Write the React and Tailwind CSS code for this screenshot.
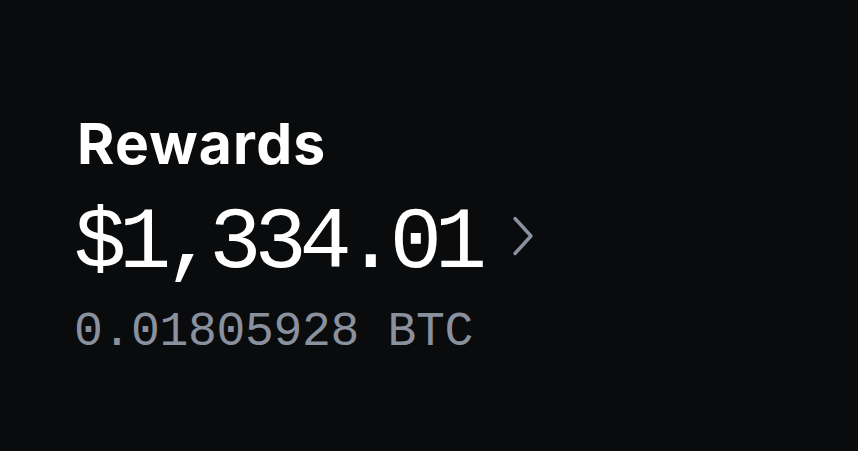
export default function App() {
  return (
    <div className="w-[858px] h-[451px] bg-[#0a0b0d] pl-[77px] pt-[115px] flex flex-col">
      <div className="text-white font-bold text-[57px] leading-[57px] tracking-[1.2px]" style={{ fontFamily: 'Inter, "Liberation Sans", sans-serif' }}>
        Rewards
      </div>
      <div className="flex items-start mt-[28px] -ml-[3px]">
        <span className="text-white text-[87px] leading-[88px] tracking-[-7.1px] whitespace-nowrap" style={{ fontFamily: '"Liberation Mono", monospace' }}>
          $1,334.01
        </span>
        <svg width="24" height="42" viewBox="0 0 24 42" className="ml-[30px] mt-[15px]" fill="none">
          <path d="M5 3.5 L21 21 L5 38.5" stroke="#8a919e" strokeWidth="3.4" strokeLinecap="round" strokeLinejoin="round" />
        </svg>
      </div>
      <div className="text-[#8a919e] text-[48px] leading-[48px] tracking-[-0.3px] mt-[20px] -ml-[3px] whitespace-nowrap" style={{ fontFamily: '"Liberation Mono", monospace' }}>
        0.01805928 BTC
      </div>
    </div>
  );
}
